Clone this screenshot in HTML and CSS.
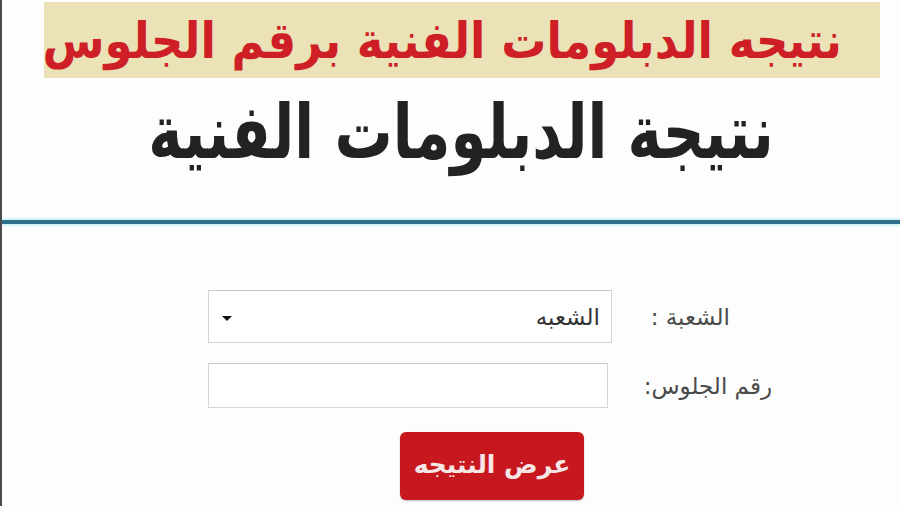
FILE: index.html
```html
<!DOCTYPE html>
<html lang="ar">
<head>
<meta charset="utf-8">
<link rel="stylesheet" href="styles.css">
</head>
<body>
<div class="page">
  <div class="banner"><span class="banner-text">نتيجه الدبلومات الفنية برقم الجلوس</span></div>
  <h1 class="title"><span class="title-text">نتيجة الدبلومات الفنية</span></h1>
  <div class="rule"></div>
  <form class="form">
    <div class="row row-branch">
      <label class="label label-branch">الشعبة :</label>
      <div class="select">
        <span class="select-value">الشعبه</span>
        <span class="caret"></span>
      </div>
    </div>
    <div class="row row-seat">
      <label class="label label-seat">رقم الجلوس:</label>
      <div class="input"></div>
    </div>
    <div class="row row-btn">
      <button type="button" class="btn">عرض النتيجه</button>
    </div>
  </form>
</div>
</body>
</html>
```
FILE: styles.css
```css
html, body {
  margin: 0;
  padding: 0;
  background: #fdfdfd;
}
.page {
  width: 898px;
  height: 506px;
  overflow: hidden;
  border-left: 2px solid #4a4a4a;
  font-family: "DejaVu Sans", sans-serif;
  background: #fdfdfd;
}
.banner {
  margin: 2px 20px 0 42px;
  height: 76px;
  background: #ebe2b8;
  direction: rtl;
  display: flex;
  align-items: center;
  padding-right: 38px;
}
.banner-text {
  color: #cf1f26;
  font-weight: bold;
  font-size: 45px;
  line-height: 1;
  white-space: nowrap;
  display: inline-block;
  transform: scaleY(1.12);
}
.title {
  margin: 0;
  height: 142px;
  display: flex;
  align-items: center;
  justify-content: center;
  direction: rtl;
  padding-left: 20px;
  font-size: 58px;
  font-weight: bold;
  color: #222;
  line-height: 1;
  white-space: nowrap;
  box-sizing: border-box;
  padding-bottom: 34px;
}
.title-text {
  display: inline-block;
  transform: scaleY(1.3);
}
.rule {
  height: 4px;
  background: #2f6f8e;
  box-shadow: 0 0 3px 1px #b8e8f4;
}
.form {
  margin: 0;
  padding-top: 66px;
  display: flex;
  flex-direction: column;
}
.row {
  display: flex;
  direction: rtl;
  align-items: center;
}
.row-branch {
  padding-right: 170px;
}
.row-seat {
  margin-top: 20px;
  padding-right: 128px;
}
.row-btn {
  margin-top: 24px;
  padding-right: 316px;
}
.label {
  font-size: 23px;
  color: #4a4a4a;
  white-space: nowrap;
  box-sizing: border-box;
}
.label-branch {
  width: 118px;
}
.label-seat {
  width: 164px;
}
.select {
  width: 404px;
  height: 53px;
  border: 1px solid #d6d6d6;
  border-top-color: #c8c8c8;
  background: #fff;
  display: flex;
  align-items: center;
  padding: 0 11px;
  box-sizing: border-box;
  position: relative;
}
.select-value {
  font-size: 23px;
  color: #333;
}
.caret {
  position: absolute;
  left: 13px;
  top: 25px;
  width: 0;
  height: 0;
  border-left: 5px solid transparent;
  border-right: 5px solid transparent;
  border-top: 5px solid #111;
}
.input {
  width: 400px;
  height: 45px;
  border: 1px solid #d6d6d6;
  border-top-color: #c8c8c8;
  background: #fff;
  box-sizing: border-box;
}
.btn {
  width: 184px;
  height: 68px;
  border: none;
  border-radius: 6px;
  background: #c8181f;
  color: #f6e6e6;
  font-family: "DejaVu Sans", sans-serif;
  font-weight: bold;
  font-size: 25px;
  direction: rtl;
  padding: 0 0 4px 0;
  box-shadow: 0 1px 2px rgba(0,0,0,0.25);
}
```
